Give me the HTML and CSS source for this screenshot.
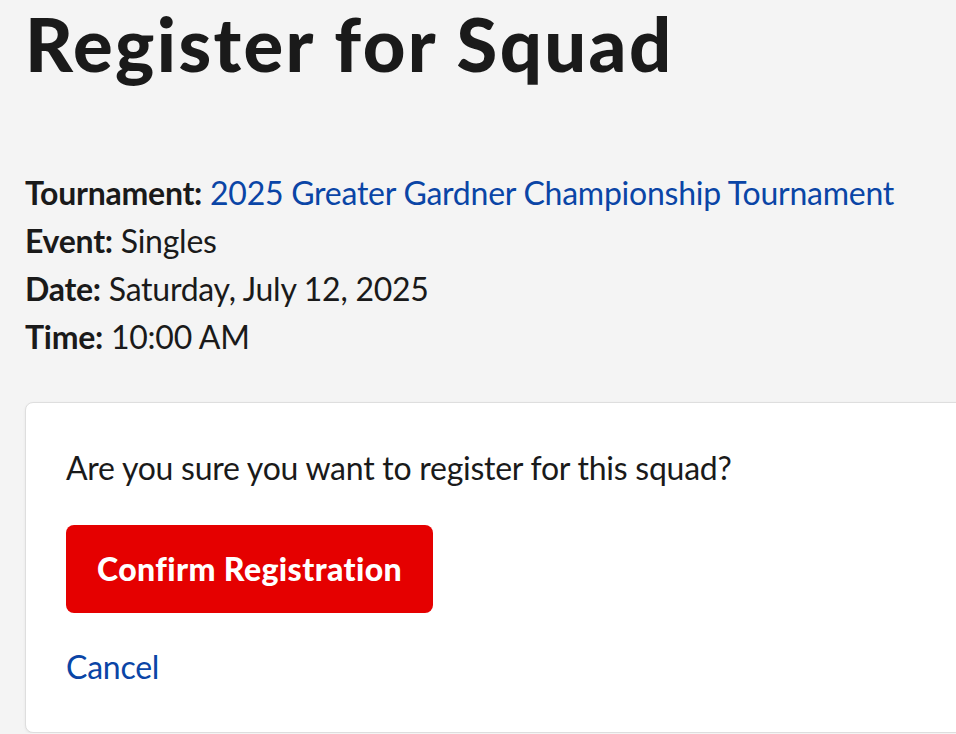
FILE: index.html
```html
<!DOCTYPE html>
<html lang="en">
<head>
  <meta charset="UTF-8">
  <meta name="viewport" content="width=device-width, initial-scale=1.0">
  <title>Register for Squad</title>
  <link rel="stylesheet" href="styles.css">
</head>
<body>
  <main class="page">
    <h1 class="page-title">Register for Squad</h1>

    <div class="squad-info">
      <p><strong>Tournament:</strong> <a href="#">2025 Greater Gardner Championship Tournament</a></p>
      <p><strong>Event:</strong> Singles</p>
      <p><strong>Date:</strong> Saturday, July 12, 2025</p>
      <p><strong>Time:</strong> 10:00 AM</p>
    </div>

    <div class="confirm-card">
      <p class="confirm-text">Are you sure you want to register for this squad?</p>
      <button class="btn-confirm" type="button">Confirm Registration</button>
      <a class="cancel-link" href="#">Cancel</a>
    </div>
  </main>
</body>
</html>
```

FILE: styles.css
```css
body {
  margin: 0;
  background: #f4f4f4;
  color: #1a1a1a;
  font-family: Lato, "Noto Sans", sans-serif;
  font-size: 32px;
  line-height: 1.5;
  letter-spacing: -0.25px;
}
.page {
  padding: 0 0 0 25px;
}
.page-title {
  margin: 0;
  font-size: 74px;
  line-height: 1.2;
  font-weight: 900;
  letter-spacing: 2.4px;
}
.squad-info {
  margin-top: 80px;
}
.squad-info p {
  margin: 0;
}
.squad-info strong {
  font-weight: 700;
}
a {
  color: #0a45a6;
  text-decoration: none;
}
.confirm-card {
  margin-top: 41px;
  margin-right: -20px;
  background: #fff;
  border: 1px solid #dedede;
  border-radius: 8px;
  box-shadow: 0 1px 3px rgba(0,0,0,0.06);
  padding: 41px 40px 41px;
}
.confirm-text {
  margin: 0 0 33px;
}
.btn-confirm {
  display: block;
  background: #e50000;
  color: #fff;
  border: none;
  border-radius: 8px;
  font-family: inherit;
  font-size: 32px;
  font-weight: 900;
  line-height: 1.5;
  letter-spacing: 0.4px;
  padding: 20px 31px;
  cursor: pointer;
}
.cancel-link {
  display: inline-block;
  margin-top: 30px;
}
```
